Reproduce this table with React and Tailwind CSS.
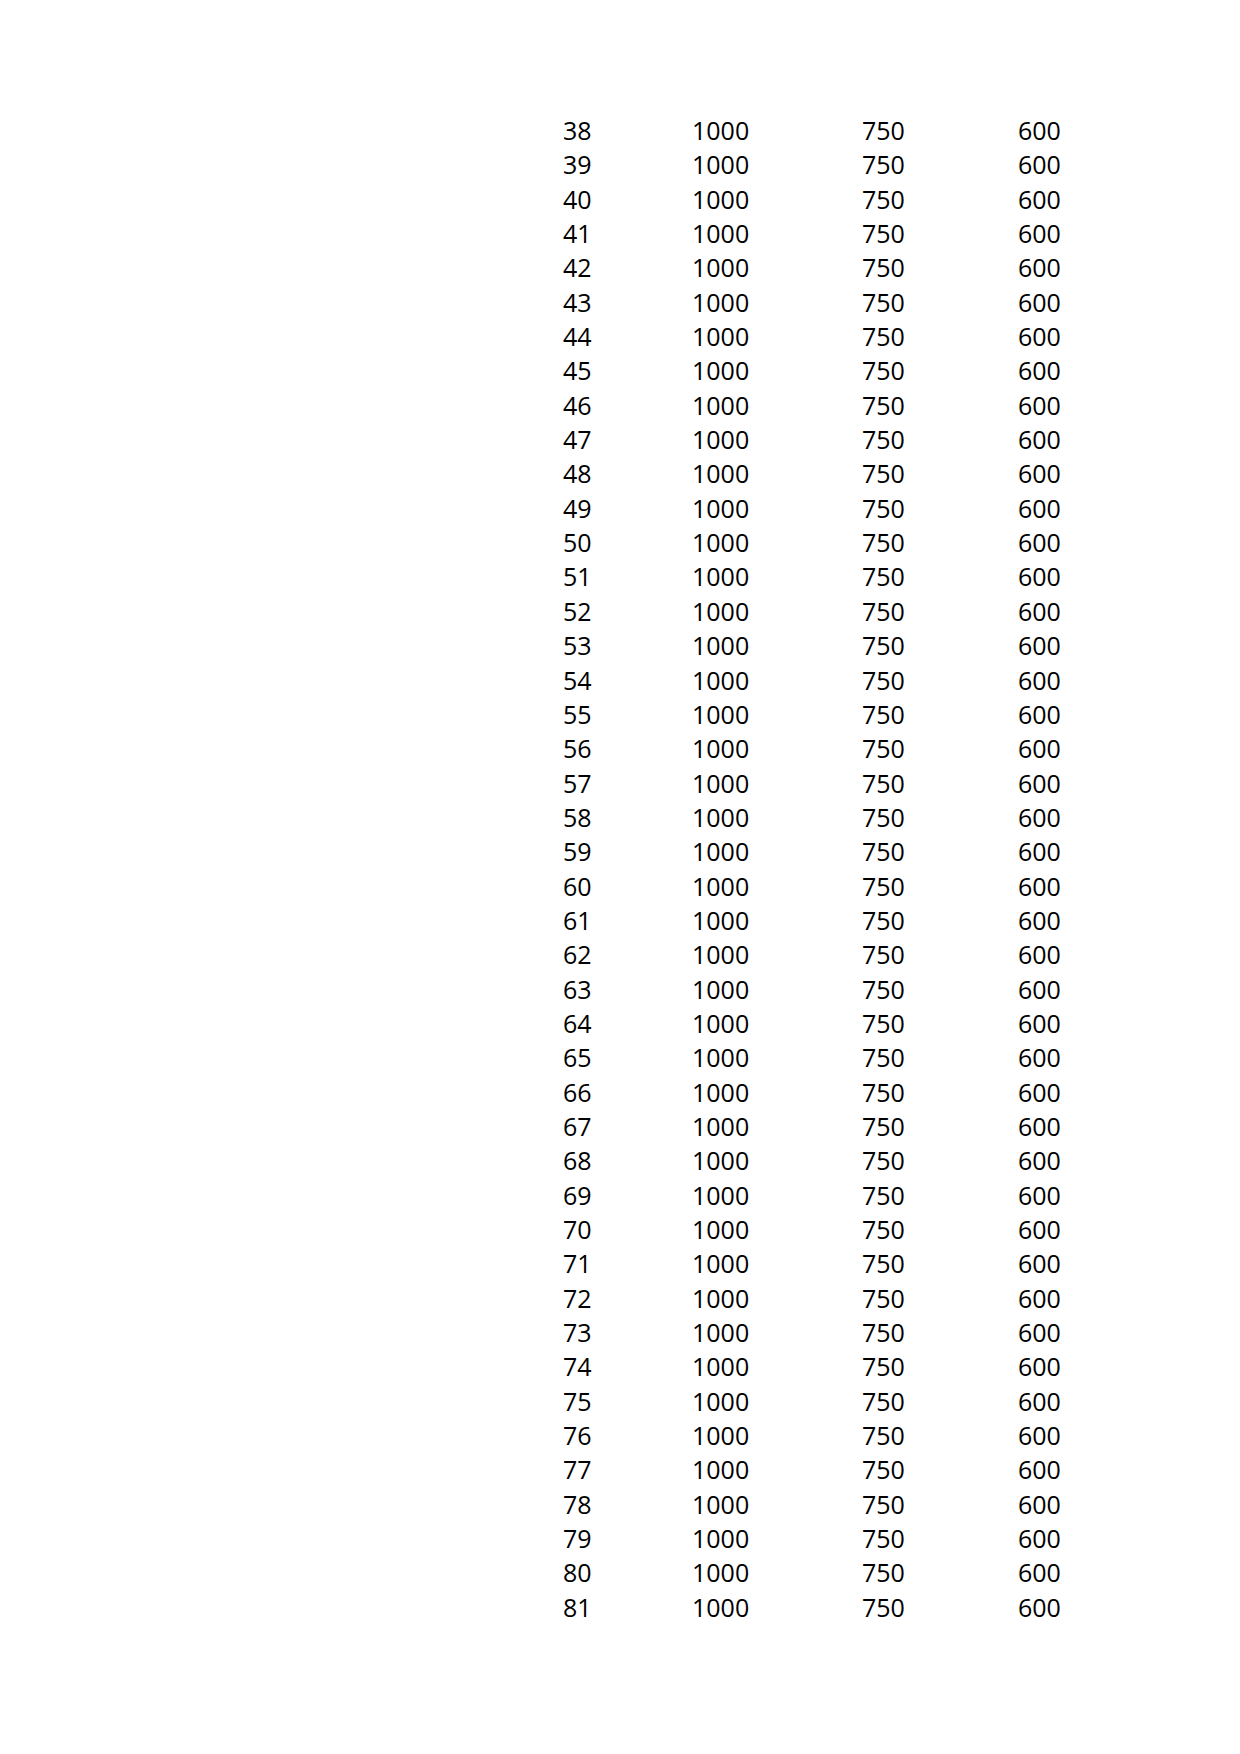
const rows = Array.from({ length: 44 }, (_, i) => 38 + i);

export default function App() {
  return (
    <div className="w-[1240px] h-[1754px] bg-white text-black" style={{ fontFamily: '"Open Sans", "Noto Sans", sans-serif' }}>
      {/* table */}
      <div className="pt-[113px] pl-[563px] text-[25px]">
        {rows.map((n) => (
          <div key={n} className="grid grid-cols-[129px_170px_156px_80px] h-[34.35px] leading-[34.35px]">
            <span>{n}</span>
            <span>1000</span>
            <span>750</span>
            <span>600</span>
          </div>
        ))}
      </div>
    </div>
  );
}
